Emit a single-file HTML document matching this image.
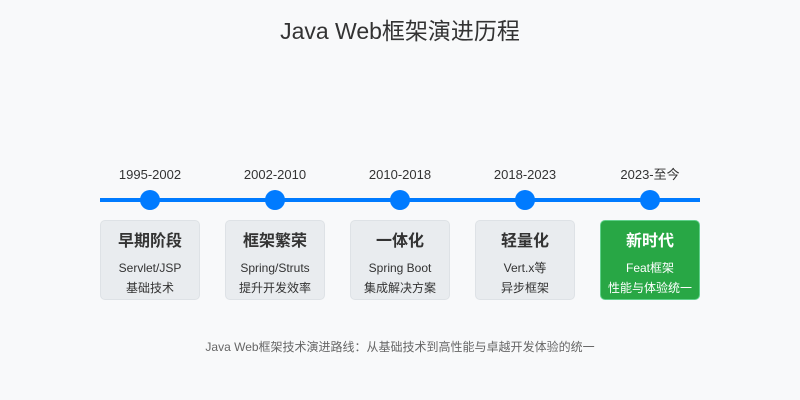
<!DOCTYPE html>
<html><head><meta charset="utf-8"><style>
body{margin:0;width:800px;height:400px;background:#f8f9fa;font-family:"Liberation Sans","Noto Sans CJK SC",sans-serif;position:relative;overflow:hidden;color:#333}
.t{position:absolute;top:16px;left:0;width:800px;text-align:center;font-size:23px;line-height:30px;color:#333}
.line{position:absolute;left:100px;top:198px;width:600px;height:4px;background:#007bff}
.dot{position:absolute;top:190px;width:20px;height:20px;border-radius:50%;background:#007bff}
.yr{position:absolute;top:167px;width:120px;text-align:center;font-size:13px;line-height:16px;height:16px;color:#333}
.box{position:absolute;top:220px;width:100px;height:80px;box-sizing:border-box;border-radius:5px;background:#e9ecef;border:1px solid #dee2e6;text-align:center}
.box b{display:block;margin-top:11px;font-size:16px;line-height:20px;color:#333}
.box span{display:block;font-size:12px;line-height:20px;color:#333}
.box b+span{margin-top:6px}
.g{background:#28a745;border-color:#5fd08a}
.g b,.g span{color:#fff}
.cap{position:absolute;top:338px;left:0;width:800px;text-align:center;font-size:12px;color:#666}
</style></head><body>
<div class="t">Java Web框架演进历程</div>
<div class="line"></div>
<div class="dot" style="left:140px"></div><div class="dot" style="left:265px"></div><div class="dot" style="left:390px"></div><div class="dot" style="left:515px"></div><div class="dot" style="left:640px"></div>
<div class="yr" style="left:90px">1995-2002</div><div class="yr" style="left:215px">2002-2010</div><div class="yr" style="left:340px">2010-2018</div><div class="yr" style="left:465px">2018-2023</div><div class="yr" style="left:590px">2023-至今</div>
<div class="box" style="left:100px"><b>早期阶段</b><span>Servlet/JSP</span><span>基础技术</span></div>
<div class="box" style="left:225px"><b>框架繁荣</b><span>Spring/Struts</span><span>提升开发效率</span></div>
<div class="box" style="left:350px"><b>一体化</b><span>Spring Boot</span><span>集成解决方案</span></div>
<div class="box" style="left:475px"><b>轻量化</b><span>Vert.x等</span><span>异步框架</span></div>
<div class="box g" style="left:600px"><b>新时代</b><span>Feat框架</span><span>性能与体验统一</span></div>
<div class="cap">Java Web框架技术演进路线：从基础技术到高性能与卓越开发体验的统一</div>
</body></html>
